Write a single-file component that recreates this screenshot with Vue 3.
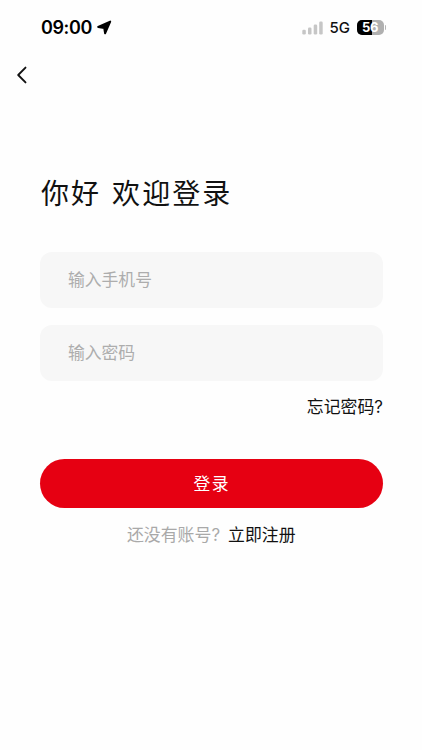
<template>
    <div class="page">
        <header class="status-bar">
            <div class="status-left">
                <span class="time">09:00</span>
                <svg class="location" width="15" height="15" viewBox="0 0 15 15">
                    <path d="M13.2 1.6 L8.1 13.3 L7.2 7.9 L1.2 6.9 Z" fill="#000" stroke="#000" stroke-width="2" stroke-linejoin="round" />
                </svg>
            </div>
            <div class="status-right">
                <svg class="signal" width="21" height="14" viewBox="0 0 21 14">
                    <rect v-for="bar in bars" :key="bar.x" :x="bar.x" :y="13.5 - bar.height" width="3.5" :height="bar.height" rx="1.3" fill="#c6c6c6" />
                </svg>
                <span class="network">5G</span>
                <div class="battery">
                    <span class="battery-level" :style="{ width: battery + '%' }"></span>
                    <span class="battery-text">{{ battery }}</span>
                </div>
                <span class="battery-cap"></span>
            </div>
        </header>

        <nav class="nav-bar">
            <button class="back" type="button" aria-label="返回">
                <svg width="12" height="18" viewBox="0 0 12 18">
                    <path d="M9.5 1.6 L2.2 9 L9.5 16.4" fill="none" stroke="#111" stroke-width="1.9" stroke-linecap="round" stroke-linejoin="round" />
                </svg>
            </button>
        </nav>

        <main class="content">
            <h1 class="title">你好 欢迎登录</h1>
            <form class="form" @submit.prevent>
                <input v-model="phone" class="field" type="tel" placeholder="输入手机号">
                <input v-model="password" class="field" type="password" placeholder="输入密码">
                <a class="forgot">忘记密码<span class="mark">?</span></a>
                <button class="submit" type="submit">登录</button>
            </form>
            <p class="register">
                <span class="hint">还没有账号<span class="mark">?</span></span>
                <a class="register-link">立即注册</a>
            </p>
        </main>
    </div>
</template>

<script setup>
import { ref } from 'vue';

const phone = ref('')
const password = ref('')
const battery = ref(56)

const bars = [
    { x: 0.3, height: 4.8 },
    { x: 6, height: 7 },
    { x: 11.7, height: 10 },
    { x: 17.2, height: 13 },
]
</script>

<style>
body {
    margin: 0;
    background: #fefefe;
}
</style>

<style scoped>
.page {
    box-sizing: border-box;
    width: 100%;
    height: 750px;
    overflow: hidden;
    background: #fefefe;
    font-family: "Noto Sans CJK SC", sans-serif;
    color: #111;
}

.status-bar {
    display: flex;
    justify-content: space-between;
    align-items: center;
    height: 55px;
    box-sizing: border-box;
    padding: 0 36px 0 41px;
}

.status-left,
.status-right {
    display: flex;
    align-items: center;
}

.time {
    font-family: Inter, sans-serif;
    font-size: 18px;
    font-weight: 600;
    line-height: 22px;
    letter-spacing: -0.4px;
    color: #000;
}

.location {
    margin-left: 5px;
}

.network {
    margin: 1px 6.5px 0 7px;
    font-family: Inter, sans-serif;
    font-size: 15px;
    font-weight: 500;
    line-height: 20px;
    color: #111;
}

.battery {
    position: relative;
    width: 27px;
    height: 15px;
    border-radius: 5px;
    overflow: hidden;
    background: #b0b0b0;
}

.battery-level {
    display: block;
    height: 100%;
    background: #000;
}

.battery-text {
    position: absolute;
    inset: 0;
    font-family: Inter, sans-serif;
    font-size: 13px;
    font-weight: 700;
    line-height: 15px;
    letter-spacing: -0.3px;
    text-align: center;
    color: #fff;
}

.battery-cap {
    width: 1.5px;
    height: 5px;
    margin-left: 1px;
    border-radius: 0 2px 2px 0;
    background: #b5b5b5;
}

.nav-bar {
    display: flex;
    align-items: center;
    height: 39px;
    padding-left: 16px;
}

.back {
    display: flex;
    padding: 0;
    border: none;
    background: none;
}

.content {
    padding: 77px 39.5px 0 40px;
}

.title {
    margin: 0 0 0 1px;
    font-size: 28px;
    font-weight: 400;
    line-height: 42px;
    letter-spacing: 2.1px;
    word-spacing: 2.5px;
}

.form {
    display: flex;
    flex-direction: column;
    margin-top: 38.5px;
}

.field {
    box-sizing: border-box;
    width: 100%;
    height: 56px;
    margin: 0 0 17px;
    padding: 0 28px 2px;
    border: none;
    border-radius: 12px;
    outline: none;
    background: #f7f7f7;
    font-family: inherit;
    font-size: 16.8px;
    color: #111;
}

.field::placeholder {
    color: #adadad;
    opacity: 1;
}

.forgot {
    align-self: flex-end;
    margin: -3.5px -0.5px 0 0;
    font-size: 16.9px;
    line-height: 24px;
}

.mark {
    font-family: Inter, sans-serif;
}

.submit {
    height: 48.5px;
    margin-top: 40px;
    padding: 0 0 1px 1px;
    border: none;
    border-radius: 25px;
    background: #e60012;
    font-family: inherit;
    font-size: 16.8px;
    letter-spacing: 1.5px;
    color: #fff;
}

.register {
    display: flex;
    justify-content: center;
    gap: 8px;
    margin: 14.8px 0 0;
    font-size: 16.9px;
    line-height: 24px;
}

.hint {
    color: #a9a9a9;
}
</style>
